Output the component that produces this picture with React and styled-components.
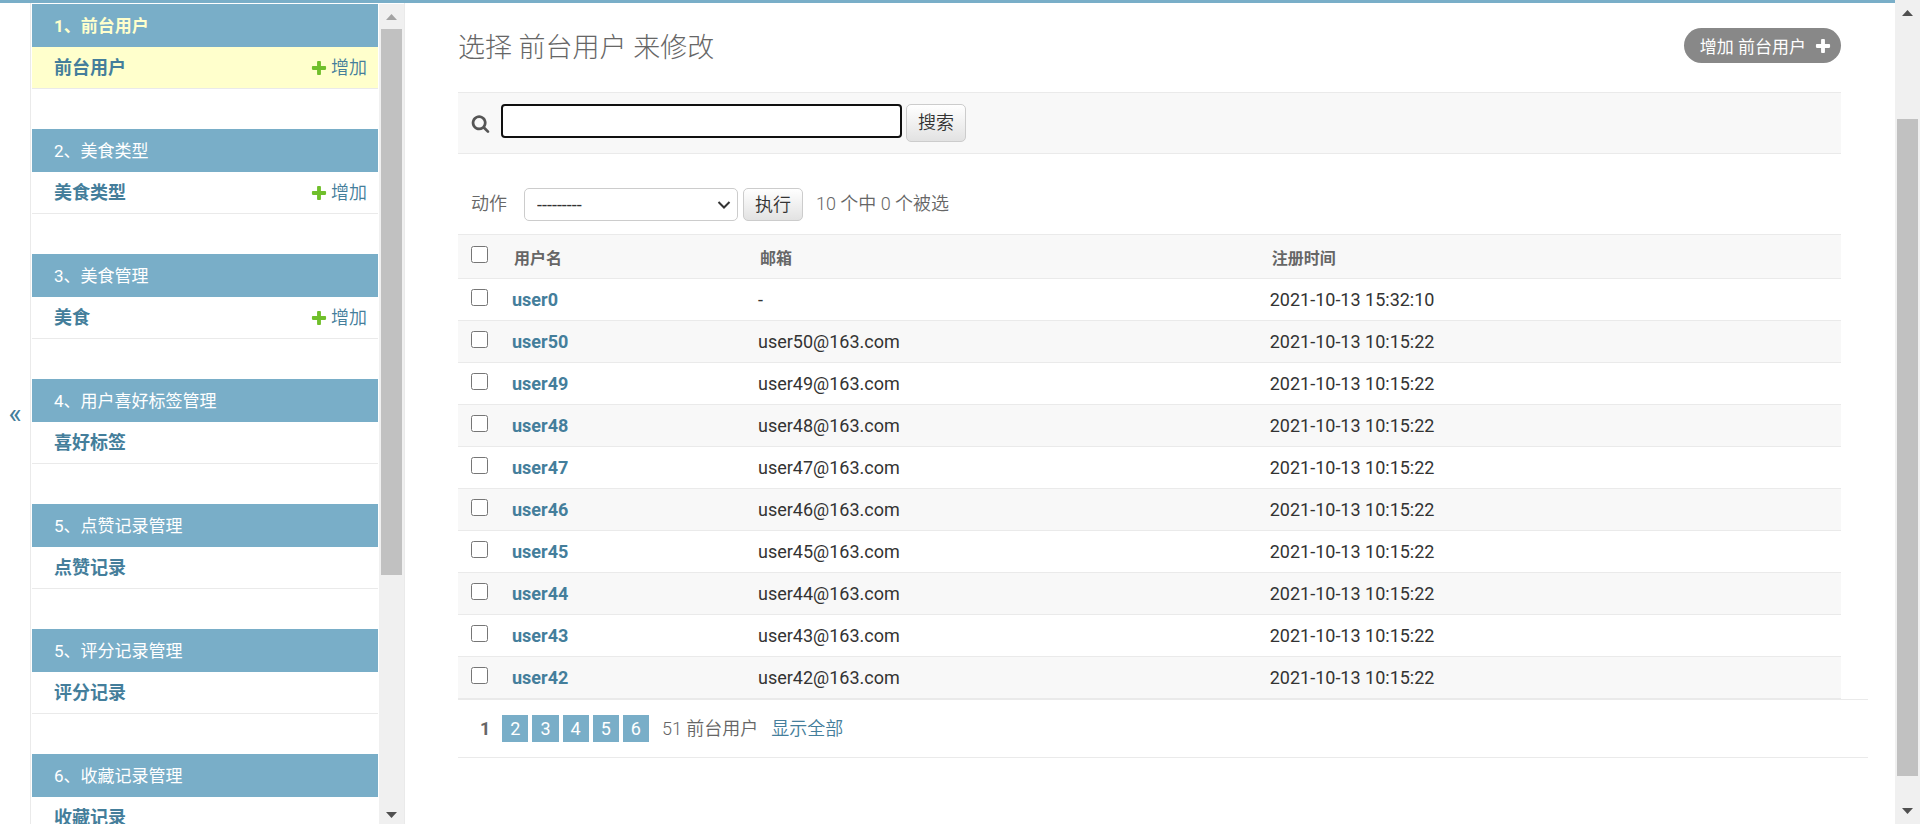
import React, { useState } from 'react';
import styled, { createGlobalStyle } from 'styled-components';

const GlobalStyle = createGlobalStyle`
  * {
    box-sizing: border-box;
  }

  body {
    margin: 0;
    overflow: hidden;
    background: #fff;
    color: #333;
    font-family: Roboto, 'Noto Sans CJK SC', sans-serif;
    font-size: 18px;
  }

  a {
    color: #447e9b;
    text-decoration: none;
  }

  button,
  input,
  select {
    font-family: inherit;
  }
`;

const Page = styled.div`
  display: flex;
  height: 100vh;
`;

const Body = styled.div`
  display: flex;
  flex: 1;
  min-width: 0;
  border-top: 3px solid #79aec8;
`;

const ToggleButton = styled.button`
  flex: none;
  width: 31px;
  padding: 0;
  border: none;
  border-right: 1px solid #eaeaea;
  background: #fff;
  color: #447e9b;
  font-size: 28px;
  cursor: pointer;
`;

const Sidebar = styled.nav`
  display: flex;
  flex: none;
  width: 374px;
  padding: 1px 0 0 1px;
  border-right: 1px solid #eaeaea;
  overflow: hidden;
`;

const ModuleList = styled.div`
  flex: 1;
  margin-right: 1px;
`;

const Module = styled.section`
  margin-bottom: 40px;
`;

const Caption = styled.h2`
  margin: 0;
  padding: 2px 22px 0;
  background: #79aec8;
  font-size: 17px;
  font-weight: ${(props) => (props.$current ? 700 : 400)};
  line-height: 41px;

  a {
    color: ${(props) => (props.$current ? '#ffc' : '#fff')};
  }
`;

const ModelRow = styled.div`
  display: flex;
  justify-content: space-between;
  padding: 0 11px 0 22px;
  border-bottom: 1px solid #eaeaea;
  background: ${(props) => (props.$current ? '#ffc' : '#fff')};
  font-size: 18px;
  line-height: 41px;
`;

const ModelLink = styled.a`
  font-weight: 700;
`;

const AddLink = styled.a`
  display: flex;
  align-items: center;
  gap: 3px;
  font-weight: 350;
`;

const Scrollbar = styled.div`
  display: flex;
  flex: none;
  flex-direction: column;
  align-items: center;
  width: 25px;
  padding: 10px 0 ${(props) => props.$bottom}px;
  background: #f0f0f0;
`;

const ScrollTrack = styled.div`
  display: grid;
  flex: 1;
  width: 21px;
  margin: 9px 0;
  grid-template-rows: ${(props) => props.$rows};
`;

const ScrollThumb = styled.div`
  grid-row: 2;
  background: #c1c1c1;
`;

const Main = styled.main`
  flex: 1;
  min-width: 0;
  padding: 25px 27px 0 53px;
`;

const Header = styled.header`
  display: flex;
  align-items: flex-start;
  justify-content: space-between;
  height: 64px;
  margin-right: 27px;
`;

const Title = styled.h1`
  margin: 0;
  color: #666;
  font-size: 27px;
  font-weight: 300;
  line-height: 40px;
`;

const AddButton = styled.a`
  display: flex;
  align-items: center;
  gap: 8px;
  height: 35px;
  padding: 0 9px 0 16px;
  border-radius: 18px;
  background: #888;
  color: #fff;
  font-size: 17px;
`;

const SearchBar = styled.form`
  display: flex;
  align-items: flex-start;
  height: 62px;
  margin-right: 27px;
  padding: 11px 13px;
  border-top: 1px solid #eaeaea;
  border-bottom: 1px solid #eaeaea;
  background: #f8f8f8;
`;

const SearchLabel = styled.label`
  display: flex;
  align-items: center;
  height: 38px;
  margin-right: 11px;
`;

const SearchInput = styled.input`
  width: 401px;
  height: 34px;
  margin-right: 4px;
  padding: 0 8px;
  border: 2px solid #101010;
  border-radius: 4px;
  outline: none;
  background: #fff;
  font-size: 18px;
`;

const Button = styled.button`
  height: ${(props) => (props.$tall ? 38 : 33)}px;
  padding: 0 11px;
  border: 1px solid #ccc;
  border-radius: 5px;
  background: linear-gradient(#fff, #e2e2e2);
  color: #333;
  font-size: 18px;
  font-weight: 350;
  line-height: 24px;
  cursor: pointer;
`;

const Actions = styled.form`
  display: flex;
  height: 80px;
  margin-right: 27px;
  padding: 34px 13px 0;
  color: #666;
  font-weight: 350;
  line-height: 31px;
`;

const SelectWrapper = styled.div`
  position: relative;
  width: 214px;
  height: 33px;
  margin: 0 5px 0 17px;

  svg {
    position: absolute;
    top: 12px;
    right: 7px;
    pointer-events: none;
  }
`;

const ActionSelect = styled.select`
  width: 100%;
  height: 100%;
  padding: 0 12px;
  border: 1px solid #ccc;
  border-radius: 5px;
  appearance: none;
  background: #fff;
  color: #333;
  font-size: 18px;
`;

const Counter = styled.span`
  margin-left: 13px;
`;

const ResultWrapper = styled.div`
  margin-right: 27px;
`;

const ResultTable = styled.table`
  width: 100%;
  border-collapse: collapse;
  table-layout: fixed;

  th,
  td {
    padding: 0 10px;
    border-bottom: 1px solid #eaeaea;
    text-align: left;
  }

  thead th {
    height: 44px;
    padding: 0 12px;
    border-top: 1px solid #eaeaea;
    background: #f8f8f8;
    color: #666;
    font-size: 16px;
    font-weight: 600;
  }

  tbody th,
  tbody td {
    height: 42px;
    font-size: 18px;
    font-weight: 400;
  }

  tbody th {
    font-weight: 700;
  }

  tbody tr:nth-child(even) {
    background: #f8f8f8;
  }

  col:nth-child(1) {
    width: 44px;
  }

  col:nth-child(2) {
    width: 246px;
  }

  col:nth-child(3) {
    width: 37%;
  }

  tr > :first-child {
    padding: 0 0 4px 13px;
    line-height: 0;
  }
`;

const Checkbox = styled.input`
  width: 17px;
  height: 17px;
  margin: 0;
`;

const Paginator = styled.div`
  display: flex;
  align-items: center;
  height: 59px;
  padding: 0 22px;
  border-top: 1px solid #eaeaea;
  border-bottom: 1px solid #eaeaea;
  color: #666;
  font-weight: 350;
  line-height: 27px;
`;

const Pages = styled.div`
  display: flex;
  gap: 4px;
  margin-right: 13px;
`;

const CurrentPage = styled.span`
  margin-right: 8px;
  font-weight: 700;
`;

const PageLink = styled.a`
  padding: 0 8px;
  background: #79aec8;
  color: #fff;
  font-weight: 400;
`;

const ShowAll = styled.a`
  margin-left: 13px;
`;

const modules = [
  { caption: '1、前台用户', model: '前台用户', add: true, current: true },
  { caption: '2、美食类型', model: '美食类型', add: true },
  { caption: '3、美食管理', model: '美食', add: true },
  { caption: '4、用户喜好标签管理', model: '喜好标签' },
  { caption: '5、点赞记录管理', model: '点赞记录' },
  { caption: '5、评分记录管理', model: '评分记录' },
  { caption: '6、收藏记录管理', model: '收藏记录' },
];

const users = [
  { name: 'user0', email: '-', date: '2021-10-13 15:32:10' },
  ...[50, 49, 48, 47, 46, 45, 44, 43, 42].map((id) => ({
    name: `user${id}`,
    email: `user${id}@163.com`,
    date: '2021-10-13 10:15:22',
  })),
];

const PlusIcon = ({ color }) => (
  <svg width="18" height="18" viewBox="0 0 1792 1792" aria-hidden="true">
    <path
      fill={color}
      d="M1600 796v192q0 40-28 68t-68 28h-416v416q0 40-28 68t-68 28h-192q-40 0-68-28t-28-68v-416h-416q-40 0-68-28t-28-68v-192q0-40 28-68t68-28h416v-416q0-40 28-68t68-28h192q40 0 68 28t28 68v416h416q40 0 68 28t28 68z"
    />
  </svg>
);

const SearchIcon = () => (
  <svg width="19" height="19" viewBox="0 0 1792 1792" aria-hidden="true">
    <path
      fill="#555"
      d="M1216 832q0-185-131.5-316.5t-316.5-131.5-316.5 131.5-131.5 316.5 131.5 316.5 316.5 131.5 316.5-131.5 131.5-316.5zm512 832q0 52-38 90t-90 38q-54 0-90-38l-343-342q-179 124-399 124-143 0-273.5-55.5t-225-150-150-225-55.5-273.5 55.5-273.5 150-225 225-150 273.5-55.5 273.5 55.5 225 150 150 225 55.5 273.5q0 220-124 399l343 343q37 37 37 90z"
    />
  </svg>
);

const ChevronIcon = () => (
  <svg width="14" height="10" viewBox="0 0 14 10" aria-hidden="true">
    <path d="M1.5 2L7 7.5L12.5 2" fill="none" stroke="#333" strokeWidth="2" />
  </svg>
);

const Arrow = ({ down, color = '#505050' }) => (
  <svg width="11" height="6" viewBox="0 0 11 6" aria-hidden="true">
    <path fill={color} d={down ? 'M0 0h11L5.5 6z' : 'M0 6h11L5.5 0z'} />
  </svg>
);

const ScrollRail = ({ rows, topColor, bottom = 10 }) => (
  <Scrollbar $bottom={bottom} aria-hidden="true">
    <Arrow color={topColor} />
    <ScrollTrack $rows={rows}>
      <ScrollThumb />
    </ScrollTrack>
    <Arrow down />
  </Scrollbar>
);

const App = () => {
  const [selected, setSelected] = useState([]);
  const [search, setSearch] = useState('');

  const toggleUser = (name) => {
    setSelected((prev) =>
      prev.includes(name) ? prev.filter((n) => n !== name) : [...prev, name],
    );
  };

  const toggleAll = (e) => {
    setSelected(e.target.checked ? users.map((user) => user.name) : []);
  };

  return (
    <Page>
      <GlobalStyle />
      <Body>
        <ToggleButton type="button" aria-label="切换导航">
          «
        </ToggleButton>
        <Sidebar>
          <ModuleList>
            {modules.map(({ caption, model, add, current }) => (
              <Module key={caption}>
                <Caption $current={current}>
                  <a href="#app">{caption}</a>
                </Caption>
                <ModelRow $current={current}>
                  <ModelLink href="#model">{model}</ModelLink>
                  {add && (
                    <AddLink href="#add">
                      <PlusIcon color="#70bf2b" />
                      增加
                    </AddLink>
                  )}
                </ModelRow>
              </Module>
            ))}
          </ModuleList>
          <ScrollRail rows="0fr 546fr 228fr" topColor="#a3a3a3" bottom={6} />
        </Sidebar>

        <Main>
          <Header>
            <Title>选择 前台用户 来修改</Title>
            <AddButton href="#add">
              增加 前台用户
              <PlusIcon color="#fff" />
            </AddButton>
          </Header>

          <SearchBar onSubmit={(e) => e.preventDefault()}>
            <SearchLabel htmlFor="searchbar" aria-label="搜索">
              <SearchIcon />
            </SearchLabel>
            <SearchInput
              id="searchbar"
              type="text"
              value={search}
              onChange={(e) => setSearch(e.target.value)}
            />
            <Button type="submit" $tall>
              搜索
            </Button>
          </SearchBar>

          <Actions onSubmit={(e) => e.preventDefault()}>
            <label htmlFor="action">动作</label>
            <SelectWrapper>
              <ActionSelect id="action" name="action">
                <option value="">---------</option>
              </ActionSelect>
              <ChevronIcon />
            </SelectWrapper>
            <Button type="submit">执行</Button>
            <Counter>
              {users.length} 个中 {selected.length} 个被选
            </Counter>
          </Actions>

          <ResultWrapper>
            <ResultTable>
              <colgroup>
                <col />
                <col />
                <col />
                <col />
              </colgroup>
              <thead>
                <tr>
                  <th scope="col">
                    <Checkbox
                      type="checkbox"
                      aria-label="全选"
                      checked={selected.length === users.length}
                      onChange={toggleAll}
                    />
                  </th>
                  <th scope="col">用户名</th>
                  <th scope="col">邮箱</th>
                  <th scope="col">注册时间</th>
                </tr>
              </thead>
              <tbody>
                {users.map(({ name, email, date }) => (
                  <tr key={name}>
                    <td>
                      <Checkbox
                        type="checkbox"
                        aria-label={name}
                        checked={selected.includes(name)}
                        onChange={() => toggleUser(name)}
                      />
                    </td>
                    <th scope="row">
                      <a href="#change">{name}</a>
                    </th>
                    <td>{email}</td>
                    <td>{date}</td>
                  </tr>
                ))}
              </tbody>
            </ResultTable>
          </ResultWrapper>

          <Paginator>
            <Pages>
              <CurrentPage>1</CurrentPage>
              {[2, 3, 4, 5, 6].map((page) => (
                <PageLink key={page} href="#page">
                  {page}
                </PageLink>
              ))}
            </Pages>
            51 前台用户
            <ShowAll href="#all">显示全部</ShowAll>
          </Paginator>
        </Main>
      </Body>
      <ScrollRail rows="94fr 657fr 23fr" />
    </Page>
  );
};

export default App;
